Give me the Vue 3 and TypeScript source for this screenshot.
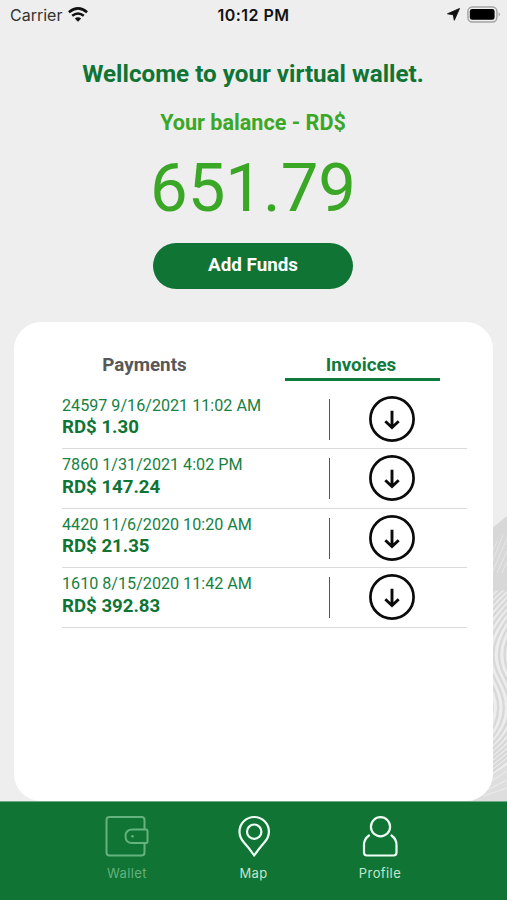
<script setup lang="ts">
interface Invoice {
  id: number
  date: string
  amount: string
}

const invoices: Invoice[] = [
  { id: 24597, date: '9/16/2021 11:02 AM', amount: '1.30' },
  { id: 7860, date: '1/31/2021 4:02 PM', amount: '147.24' },
  { id: 4420, date: '11/6/2020 10:20 AM', amount: '21.35' },
  { id: 1610, date: '8/15/2020 11:42 AM', amount: '392.83' },
]

// Horizontal offsets of the parallel contour lines behind the card.
const contourOffsets: number[] = Array.from({ length: 16 }, (_, i) => -48 + i * 5.6)
</script>

<template>
  <div class="screen">
    <svg class="contours" viewBox="0 0 34 290" aria-hidden="true">
      <path d="M10 26 34 5V290H0V255H10Z" fill="#ededed" />
      <path d="M18 18 34 5V77H18Z" fill="#d8d8d8" />
      <g fill="none" stroke="#e6e6e6" stroke-width="1">
        <path d="M19 42 24 30M18 54 30 24M19 62 34 27M24 62 34 40M29 62 34 51" />
      </g>
      <g fill="none" stroke="#d8d8d8" stroke-width="2.4">
        <path
          v-for="offset in contourOffsets"
          :key="offset"
          :transform="`translate(${offset} 0)`"
          d="M60 78C27 108 18 128 18 144C18 164 34 175 34 197C34 222 14 238-24 266"
        />
      </g>
      <path d="M18 77H34V79L18 80Z" fill="#d8d8d8" />
      <path d="M0 276 34 254V290H0Z" fill="#dedede" />
      <path d="M14 273 34 260M14 279 34 269M10 285 34 277" fill="none" stroke="#e9e9e9" stroke-width="1.2" />
    </svg>

    <header class="status">
      <div class="carrier">
        <span>Carrier</span>
        <svg width="20" height="15" viewBox="0 0 20 15" fill="none" stroke="#111" stroke-width="2.5">
          <path d="M.9 5.2Q10-2.5 19.1 5.2" />
          <path d="M4.2 8.8Q10 4.1 15.8 8.8" />
          <path d="M10 14.8 6.8 11.5Q10 8.8 13.2 11.5Z" fill="#111" stroke="none" />
        </svg>
      </div>
      <time class="clock">10:12 PM</time>
      <div class="indicators">
        <svg width="13" height="13" viewBox="0 0 13 13"><path d="M12.5.5 7.3 12.3 6.3 6.8.5 5.8Z" fill="#111" stroke="#111" stroke-width=".9" stroke-linejoin="round" /></svg>
        <svg width="34" height="17" viewBox="0 0 34 17">
          <rect x=".9" y=".9" width="29" height="15" rx="4.4" fill="none" stroke="#a5a5a5" stroke-width="1.5" />
          <rect x="2.8" y="3" width="24.8" height="10.8" rx="2.4" fill="#000" />
          <path d="M31.6 6.2Q34.4 8.4 31.6 10.6Z" fill="#a5a5a5" />
        </svg>
      </div>
    </header>

    <section class="summary">
      <h1>Wellcome to your virtual wallet.</h1>
      <h2>Your balance - RD$</h2>
      <p class="balance">651.79</p>
      <button class="add" type="button">Add Funds</button>
    </section>

    <main class="card">
      <div class="tabs">
        <button class="tab" type="button">Payments</button>
        <button class="tab active" type="button">Invoices</button>
      </div>
      <ul class="list">
        <li v-for="invoice in invoices" :key="invoice.id" class="row">
          <div class="details">
            <span class="date">{{ invoice.id }} {{ invoice.date }}</span>
            <strong class="amount">RD$ {{ invoice.amount }}</strong>
          </div>
          <button class="download" type="button">
            <svg width="48" height="48" viewBox="0 0 48 48" fill="none" stroke="#0b0b0b">
              <circle cx="24" cy="24" r="21.6" stroke-width="2.7" />
              <path d="M24 15.7V32.5M17.3 26.2 24 32.5 30.7 26.2" stroke-width="2.9" />
            </svg>
          </button>
        </li>
      </ul>
    </main>

    <nav class="nav">
      <a class="item current">
        <svg width="46" height="44" viewBox="0 0 46 44" fill="none" stroke="currentColor" stroke-width="2">
          <path d="M40.5 15.5V6Q40.5 3 37.5 3H5.5Q2.5 3 2.5 6V38.5Q2.5 41.5 5.5 41.5H37.5Q40.5 41.5 40.5 38.5V29" />
          <path d="M42 15.5H28.5Q21.5 15.5 21.5 22.3T28.5 29H42Q43.5 29 43.5 27.5V17Q43.5 15.5 42 15.5Z" />
          <circle cx="28.5" cy="22.3" r="1.3" fill="currentColor" stroke="none" />
        </svg>
        <span>Wallet</span>
      </a>
      <a class="item">
        <svg width="46" height="44" viewBox="0 0 46 44" fill="none" stroke="currentColor" stroke-width="2.2">
          <path d="M23.2 41.5Q18.5 34.500 13 28.500Q8.500 23.500 8.500 17.700A14.700 14.700 0 0 1 37.900 17.700Q37.900 23.500 33.300 28.500Q28 34.500 23.200 41.500Z" stroke-linejoin="round" />
          <circle cx="23.2" cy="17.7" r="7.2" />
        </svg>
        <span>Map</span>
      </a>
      <a class="item">
        <svg width="46" height="44" viewBox="0 0 46 44" fill="none" stroke="currentColor" stroke-width="2.2">
          <circle cx="23.5" cy="12.7" r="9.6" />
          <path d="M12 21.5Q7 25 7 31V38.5Q7 41.5 10 41.5H36.5Q39.500 41.500 39.500 38.500V31Q39.500 25 34.500 21.500" stroke-linecap="round" />
        </svg>
        <span>Profile</span>
      </a>
    </nav>
  </div>
</template>

<style>
body {
  margin: 0;
}
</style>

<style scoped>
.screen {
  position: relative;
  display: flex;
  flex-direction: column;
  width: 507px;
  height: 900px;
  overflow: hidden;
  background: #eee;
  font-family: Roboto, sans-serif;
}

button {
  padding: 0;
  border: 0;
  background: none;
  font: inherit;
}

.contours {
  position: absolute;
  right: 0;
  bottom: 99px;
  width: 34px;
  height: 290px;
}

.status {
  display: grid;
  grid-template-columns: 1fr auto 1fr;
  box-sizing: border-box;
  height: 30px;
  padding: 0 6px;
  align-items: center;
  font-family: Inter, sans-serif;
  color: #111;
}

.carrier {
  display: flex;
  align-items: center;
  gap: 6px;
  padding-left: 4px;
  font-size: 16px;
  color: #333;
}

.clock {
  font-size: 16px;
  font-weight: 600;
  letter-spacing: 0.45px;
}

.indicators {
  display: flex;
  align-items: center;
  justify-content: flex-end;
  gap: 7px;
}

.indicators svg,
.carrier svg {
  margin-bottom: 2px;
}

.summary {
  display: flex;
  flex-direction: column;
  align-items: center;
  padding-right: 1px;
}

h1,
h2,
p {
  margin: 0;
  white-space: nowrap;
}

h1 {
  padding-top: 30px;
  font-size: 24.2px;
  line-height: 29px;
  font-weight: 700;
  color: #107434;
}

h2 {
  padding-top: 21px;
  font-size: 21.6px;
  line-height: 26px;
  font-weight: 700;
  color: #3ba726;
}

.balance {
  padding-top: 13px;
  font-size: 67px;
  line-height: 78px;
  color: #3ba726;
}

.add {
  margin-top: 16px;
  width: 200px;
  height: 46px;
  border-radius: 23px;
  background: #107434;
  color: #fff;
  font-size: 18.8px;
  font-weight: 700;
  padding-bottom: 2px;
}

.card {
  position: relative;
  box-sizing: border-box;
  width: 479px;
  height: 479px;
  margin: 33px 0 0 14px;
  padding: 29px 26px 0 48px;
  border-radius: 27px;
  background: #fff;
}

.tabs {
  display: flex;
  gap: 63px;
  padding-left: 5px;
}

.tab {
  width: 155px;
  height: 30px;
  box-sizing: border-box;
  padding: 2px 3px 0 0;
  border-bottom: 3px solid transparent;
  font-size: 18.8px;
  line-height: 25px;
  font-weight: 700;
  color: #58585a;
}

.tab:first-child {
  padding-right: 0;
}

.tab.active {
  border-color: #107a3d;
  color: #107a3d;
}

.list {
  margin: 0;
  padding: 9px 0 0;
  list-style: none;
}

.row {
  display: flex;
  box-sizing: border-box;
  height: 59.4px;
  border-bottom: 1px solid #dadada;
}

.details {
  display: flex;
  flex-direction: column;
  box-sizing: border-box;
  width: 268px;
  height: 41px;
  margin-top: 9px;
  border-right: 1px solid #555;
  color: #17813f;
  white-space: nowrap;
}

.date {
  height: 17.4px;
  font-size: 16.15px;
  line-height: 14.4px;
}

.amount {
  font-size: 18.65px;
  line-height: 23px;
  color: #107434;
}

.download {
  width: 48px;
  height: 48px;
  margin: 5px 0 0 38px;
}

.download svg,
.item svg {
  display: block;
}

.nav {
  display: flex;
  flex: 1;
  box-sizing: border-box;
  justify-content: center;
  padding-top: 12px;
  border-top: 1px solid #6fa983;
  background: #107434;
}

.item {
  display: flex;
  flex-direction: column;
  align-items: center;
  width: 126.5px;
  color: #f0fff5;
  font-family: Inter, sans-serif;
  font-size: 13px;
  letter-spacing: 0.4px;
}

.item span {
  padding-top: 6px;
  line-height: 18px;
  color: #c5e5ce;
}

.item.current,
.item.current span {
  color: #64b27d;
}
</style>
